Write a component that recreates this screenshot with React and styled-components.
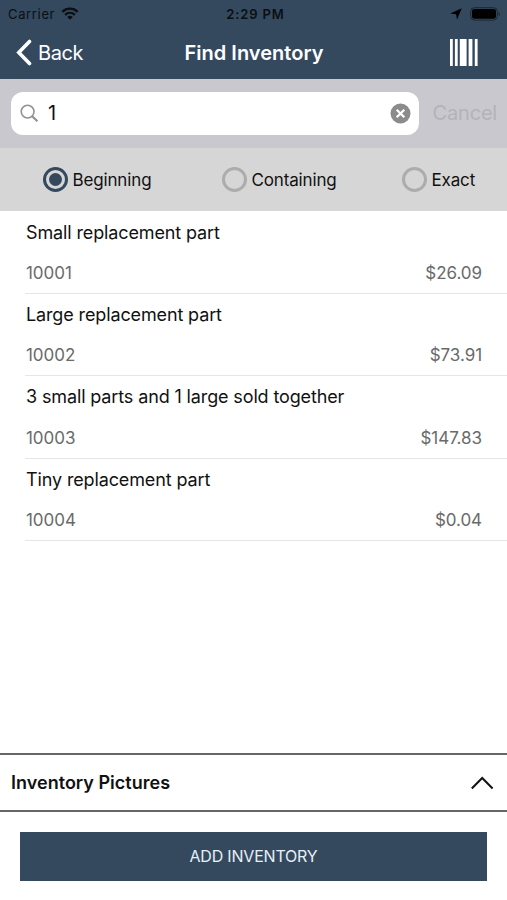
import React from 'react';
import styled, { createGlobalStyle } from 'styled-components';

const navy = '#34495e';

const GlobalStyle = createGlobalStyle`
    * {
        box-sizing: border-box;
    }

    body {
        margin: 0;
        background: #fff;
        color: #111;
        font-family: Inter, "Liberation Sans", sans-serif;
    }

    button {
        padding: 0;
        border: 0;
        background: none;
        font: inherit;
        color: inherit;
    }
`;

const Screen = styled.div`
    display: flex;
    flex-direction: column;
    width: 507px;
    height: 900px;
    overflow: hidden;
`;

const Header = styled.header`
    height: 79px;
    background: ${navy};
`;

const StatusBar = styled.div`
    display: grid;
    grid-template-columns: 1fr auto 1fr;
    align-items: center;
    height: 27px;
    padding: 0 6px 0 8px;
    color: #0a0f14;
    font-size: 13px;
`;

const Carrier = styled.div`
    display: flex;
    align-items: center;
    gap: 6px;
    letter-spacing: 0.65px;
`;

const Time = styled.div`
    padding-left: 2px;
    font-weight: 600;
    letter-spacing: 0.85px;
`;

const Indicators = styled.div`
    display: flex;
    align-items: center;
    justify-content: flex-end;
    gap: 8px;
`;

const NavBar = styled.div`
    display: grid;
    grid-template-columns: 1fr auto 1fr;
    align-items: center;
    height: 51px;
    padding: 0 15px 0 16px;
    color: #fff;
`;

const Back = styled.button`
    display: flex;
    align-items: center;
    justify-self: start;
    gap: 5px;
    font-size: 20px;
    letter-spacing: -0.45px;
`;

const Title = styled.h1`
    margin: 0;
    font-size: 20px;
    font-weight: 600;
    letter-spacing: 0.03px;
`;

const Scan = styled.button`
    display: flex;
    justify-self: end;
    margin-right: 14px;
`;

const SearchBar = styled.div`
    display: flex;
    align-items: center;
    height: 69px;
    padding: 0 10px 1px 11px;
    background: #c9c8ce;
`;

const Field = styled.div`
    display: flex;
    align-items: center;
    width: 408px;
    height: 43px;
    padding: 0 8px 0 9px;
    border-radius: 12px;
    background: #fff;
`;

const Query = styled.div`
    flex: 1;
    padding-left: 9px;
    font-size: 20px;
`;

const Cancel = styled.button`
    margin-left: 14px;
    color: #b3b3b9;
    font-size: 20px;
    letter-spacing: -0.2px;
`;

const Filters = styled.div`
    display: grid;
    grid-template-columns: 179px 180px auto;
    align-items: center;
    height: 63px;
    padding: 0 32px 0 42.5px;
    background: #d6d6d6;
`;

const Option = styled.div`
    display: flex;
    align-items: center;
    gap: 5px;
    font-size: 17px;
    letter-spacing: -0.15px;
`;

const Radio = styled.span`
    display: flex;
    align-items: center;
    justify-content: center;
    width: 25px;
    height: 25px;
    border: 3px solid ${props => (props.$checked ? navy : '#acacac')};
    border-radius: 50%;

    &:after {
        content: '';
        width: 13px;
        height: 13px;
        border-radius: 50%;
        background: ${props => (props.$checked ? navy : 'transparent')};
    }
`;

const List = styled.div`
    flex: 1;
    padding: 1px 0 0 25px;
`;

const Item = styled.div`
    display: flex;
    flex-direction: column;
    justify-content: space-between;
    height: 82.2px;
    padding: 10px 25px 9px 1px;
    border-bottom: 1px solid #e6e6e6;
`;

const Name = styled.div`
    font-size: 18px;
    line-height: 22px;
    letter-spacing: -0.13px;
`;

const Details = styled.div`
    display: flex;
    justify-content: space-between;
    color: #6a6a6a;
    font-size: 17px;
    line-height: 22px;
    letter-spacing: -0.05px;
`;

const Pictures = styled.section`
    display: flex;
    align-items: center;
    justify-content: space-between;
    height: 59px;
    padding: 0 13px 0 11px;
    border-top: 2px solid #666;
    border-bottom: 2px solid #666;
`;

const PicturesTitle = styled.h2`
    margin: 0;
    font-size: 18px;
    font-weight: 600;
    letter-spacing: 0.02px;
`;

const Footer = styled.footer`
    height: 88px;
    padding: 20px 20px 0;
`;

const AddButton = styled.button`
    width: 100%;
    height: 48.5px;
    background: ${navy};
    color: #e6f0f8;
    font-size: 16px;
    letter-spacing: -0.2px;
`;

const WifiIcon = () => (
    <svg width="18" height="13" viewBox="0 0 18 13" fill="none" stroke="currentColor" strokeWidth="2.4">
        <path d="M1.3 4.8C5.6.6 12.4.6 16.7 4.8" />
        <path d="M4.1 7.8C7 5.2 11 5.2 13.9 7.8" />
        <path d="M9 12.7 6.2 9.9C7.8 8.5 10.2 8.5 11.8 9.9Z" fill="currentColor" stroke="none" />
    </svg>
);

const LocationIcon = () => (
    <svg width="12" height="12" viewBox="0 0 12 12" fill="#000">
        <path d="M11.8.2 7 11.6 6.1 6.3.2 5.6Z" />
    </svg>
);

const BatteryIcon = () => (
    <svg width="31" height="14" viewBox="0 0 31 14">
        <rect x=".7" y=".7" width="26.6" height="12.4" rx="3.6" fill="none" stroke="#1b2834" strokeWidth="1" />
        <rect x="2" y="2" width="24" height="9.8" rx="2.2" fill="#000" />
        <path d="M28.6 4.7C30.4 5.4 30.4 8.4 28.6 9.1Z" fill="#1b2834" />
    </svg>
);

const BackIcon = () => (
    <svg width="17" height="27" viewBox="0 0 17 27" fill="none" stroke="#fff" strokeWidth="3.6" strokeLinecap="round">
        <path d="M13.5 2.5 2.8 13.5 13.5 24.5" strokeLinejoin="miter" />
    </svg>
);

const BarcodeIcon = () => (
    <svg width="28" height="27" viewBox="0 0 28 27" fill="#fff">
        <rect x="0" width="2.8" height="27" />
        <rect x="4.9" width="2.8" height="27" />
        <rect x="9.8" width="6.8" height="27" />
        <rect x="18.6" width="3.8" height="27" />
        <rect x="24.8" width="2.8" height="27" />
    </svg>
);

const SearchIcon = () => (
    <svg width="19" height="19" viewBox="0 0 19 19" fill="none" stroke="#929292">
        <circle cx="7.6" cy="7.6" r="6.4" strokeWidth="1.6" />
        <path d="M12.2 12.2 17.4 17.3" strokeWidth="2.2" />
    </svg>
);

const ClearIcon = () => (
    <svg width="21" height="21" viewBox="0 0 21 21">
        <circle cx="10.5" cy="10.5" r="10" fill="#8b8b8d" />
        <path d="M6.7 6.7 14.3 14.3M14.3 6.7 6.7 14.3" stroke="#fff" strokeWidth="2.2" />
    </svg>
);

const ChevronUp = () => (
    <svg width="24" height="14" viewBox="0 0 24 14" fill="none" stroke="#111" strokeWidth="2">
        <path d="M1.8 12.5 12.2 2 22.6 12.5" />
    </svg>
);

const items = [
    { name: 'Small replacement part', number: '10001', price: '$26.09' },
    { name: 'Large replacement part', number: '10002', price: '$73.91' },
    { name: '3 small parts and 1 large sold together', number: '10003', price: '$147.83' },
    { name: 'Tiny replacement part', number: '10004', price: '$0.04' },
];

export default () => (
    <Screen>
        <GlobalStyle />
        <Header>
            <StatusBar>
                <Carrier>Carrier <WifiIcon /></Carrier>
                <Time>2:29 PM</Time>
                <Indicators><LocationIcon /><BatteryIcon /></Indicators>
            </StatusBar>
            <NavBar>
                <Back><BackIcon />Back</Back>
                <Title>Find Inventory</Title>
                <Scan aria-label="Scan"><BarcodeIcon /></Scan>
            </NavBar>
        </Header>

        <SearchBar>
            <Field>
                <SearchIcon />
                <Query>1</Query>
                <ClearIcon />
            </Field>
            <Cancel>Cancel</Cancel>
        </SearchBar>

        <Filters>
            <Option><Radio $checked />Beginning</Option>
            <Option><Radio />Containing</Option>
            <Option><Radio />Exact</Option>
        </Filters>

        <List>
            {items.map(item => (
                <Item key={item.number}>
                    <Name>{item.name}</Name>
                    <Details>
                        <span>{item.number}</span>
                        <span>{item.price}</span>
                    </Details>
                </Item>
            ))}
        </List>

        <Pictures>
            <PicturesTitle>Inventory Pictures</PicturesTitle>
            <ChevronUp />
        </Pictures>
        <Footer>
            <AddButton>ADD INVENTORY</AddButton>
        </Footer>
    </Screen>
);
